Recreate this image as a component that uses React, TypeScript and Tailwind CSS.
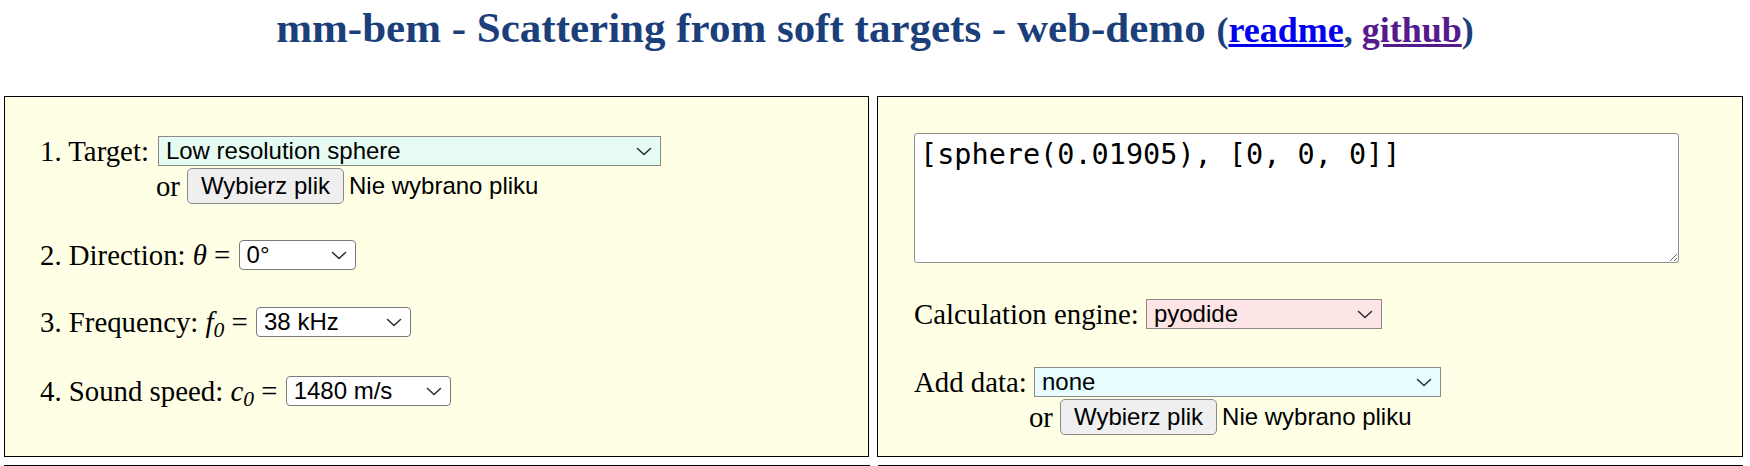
import React from "react";

const Chevron = () => (
  <svg width="16" height="9" viewBox="0 0 16 9" className="shrink-0" aria-hidden="true">
    <polyline
      points="1.5,1.5 8,7.5 14.5,1.5"
      fill="none"
      stroke="#2b2b2b"
      strokeWidth="1.5"
      strokeLinecap="round"
      strokeLinejoin="round"
    />
  </svg>
);

type SelProps = { value: string; className: string };

const FauxSelect = ({ value, className }: SelProps) => (
  <div
    className={
      "flex h-[30px] shrink-0 items-center justify-between border pl-[7px] pr-[8px] font-['Liberation_Sans',Arial,sans-serif] text-[24px] leading-[28px] text-black " +
      className
    }
  >
    <span>{value}</span>
    <Chevron />
  </div>
);

const FileRow = ({ className }: { className: string }) => (
  <div className={"flex items-center " + className}>
    <span className="text-[28.8px] leading-[36px]">or</span>
    <button className="ml-[7px] h-[36px] rounded-[5px] border border-[#8a8a8a] bg-[#efefef] px-[13px] font-['Liberation_Sans',Arial,sans-serif] text-[24px] leading-[28px] text-black">
      Wybierz plik
    </button>
    <span className="ml-[5px] font-['Liberation_Sans',Arial,sans-serif] text-[24px] leading-[28px] text-black">
      Nie wybrano pliku
    </span>
  </div>
);

export default function App() {
  return (
    <div className="h-[466px] overflow-hidden bg-white font-['Liberation_Serif','Times_New_Roman',serif] text-black">
      <h2 className="h-[52px] pt-[4px] text-center text-[43px] font-bold leading-[48px] text-[#1b3f7b]">
        mm-bem - Scattering from soft targets - web-demo{" "}
        <span className="text-[36px] leading-[38px]">
          (
          <a href="#" className="text-[#0000ee] underline">
            readme
          </a>
          ,{" "}
          <a href="#" className="text-[#551a8b] underline">
            github
          </a>
          )
        </span>
      </h2>

      <div className="mt-[44px] flex gap-[8px] pl-[4px] pr-[7px]">
        {/* Left panel */}
        <div className="h-[361px] flex-1 border border-black bg-[#ffffe6] pl-[35px] pt-[39px] text-[28.8px]">
          <div className="flex items-start">
            <span className="whitespace-pre leading-[30px]">1. Target:</span>
            <div className="ml-[7px] flex flex-col">
              <FauxSelect
                value="Low resolution sphere"
                className="ml-[2px] w-[503px] border-[#8a8a8a] bg-[#e6fcf2]"
              />
              <FileRow className="mt-[2px]" />
            </div>
          </div>

          <div className="mt-[36px] flex items-center">
            <span className="whitespace-pre leading-[30px]">
              2. Direction: <i>θ</i> ={" "}
            </span>
            <FauxSelect value="0°" className="ml-[1px] w-[117px] rounded-[4px] border-[#7a7a7a] bg-white" />
          </div>

          <div className="mt-[37px] flex items-center">
            <span className="whitespace-pre leading-[30px]">
              3. Frequency: <i>f<sub>0</sub></i> ={" "}
            </span>
            <FauxSelect value="38 kHz" className="ml-[1px] w-[155px] rounded-[4px] border-[#7a7a7a] bg-white" />
          </div>

          <div className="mt-[39px] flex items-center">
            <span className="whitespace-pre leading-[30px]">
              4. Sound speed: <i>c<sub>0</sub></i> ={" "}
            </span>
            <FauxSelect value="1480 m/s" className="ml-[1px] w-[165px] rounded-[4px] border-[#7a7a7a] bg-white" />
          </div>
        </div>

        {/* Right panel */}
        <div className="h-[361px] flex-1 border border-black bg-[#ffffe6] pl-[36px] pt-[36px] text-[28.8px]">
          <textarea
            readOnly
            spellCheck={false}
            defaultValue="[sphere(0.01905), [0, 0, 0]]"
            className="block h-[130px] w-[765px] rounded-[3px] border border-[#8f8f8f] bg-white pl-[5px] pt-[4px] font-['DejaVu_Sans_Mono',monospace] text-[28.5px] leading-[34px] text-black outline-none"
          />

          <div className="mt-[36px] flex items-center">
            <span className="whitespace-pre leading-[30px]">Calculation engine: </span>
            <FauxSelect value="pyodide" className="w-[236px] border-[#8a8a8a] bg-[#fde5e5]" />
          </div>

          <div className="mt-[38px] flex items-start">
            <span className="whitespace-pre leading-[30px]">Add data: </span>
            <div className="flex flex-col">
              <FauxSelect value="none" className="w-[407px] border-[#8a8a8a] bg-[#e6fcff]" />
              <FileRow className="-ml-[5px] mt-[2px]" />
            </div>
          </div>
        </div>
      </div>

      {/* Next row of panels (only top edge visible) */}
      <div className="mt-[8px] flex gap-[8px] pl-[4px] pr-[7px]">
        <div className="h-[200px] flex-1 border border-black bg-[#ffffe6]" />
        <div className="h-[200px] flex-1 border border-black bg-[#ffffe6]" />
      </div>
    </div>
  );
}
